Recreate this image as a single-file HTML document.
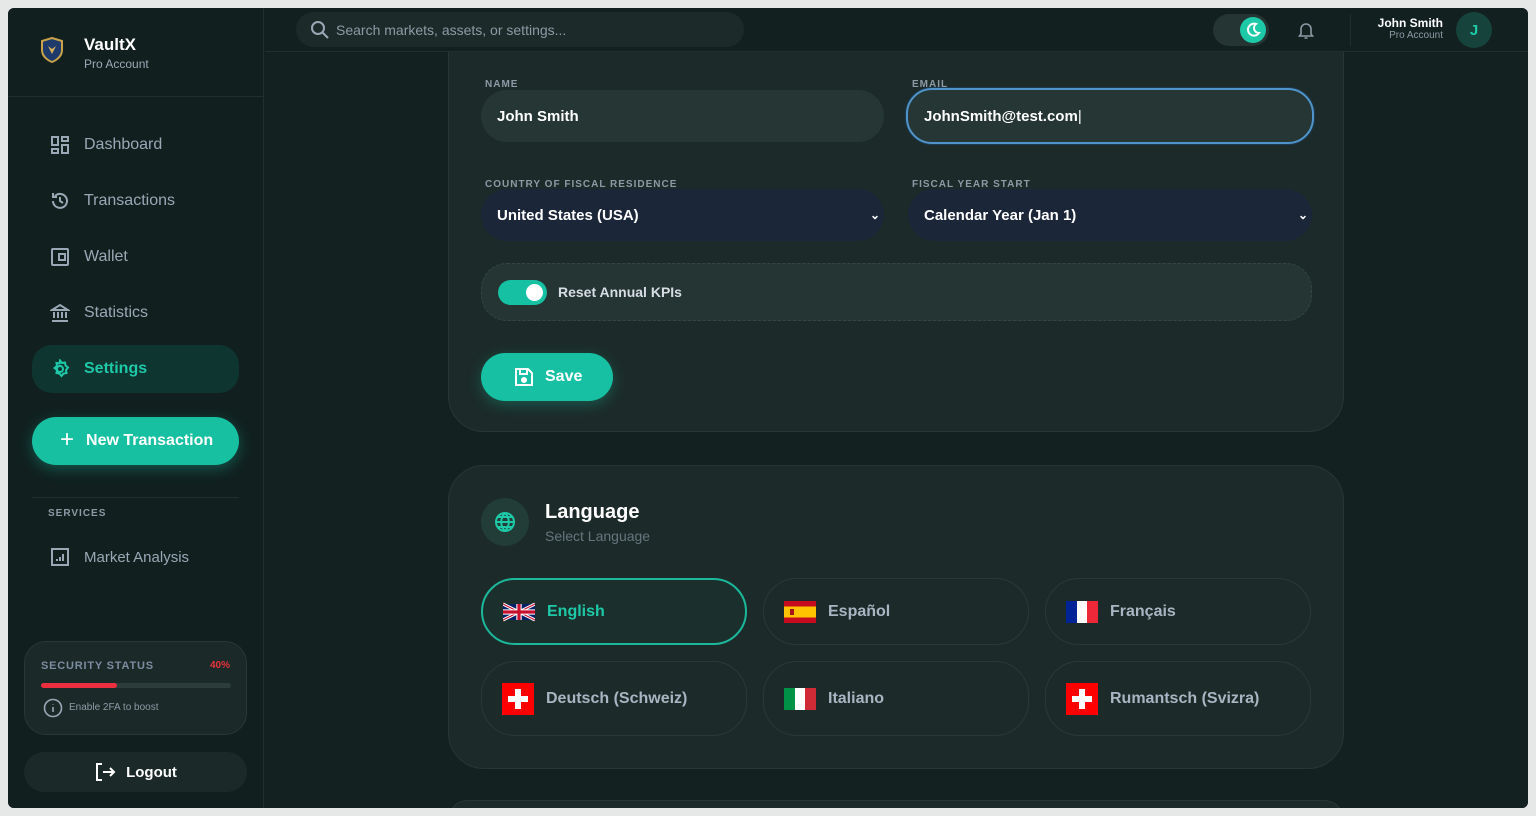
<!DOCTYPE html>
<html><head><meta charset="utf-8"><style>
*{box-sizing:border-box;margin:0;padding:0}
html,body{width:1536px;height:816px;overflow:hidden}
body{background:#e6e8e8;font-family:"Liberation Sans",sans-serif;position:relative}
.app{position:absolute;left:8px;top:8px;width:1520px;height:800px;background:#12201f;border-radius:6px;overflow:hidden}
.side{position:absolute;left:0;top:0;width:256px;height:800px;background:#11201f;border-right:1px solid #1f302e}
.abs{position:absolute}
.nav{position:absolute;left:24px;width:207px;height:48px;border-radius:20px;display:flex;align-items:center;padding-left:18px;color:#9aa8b6;font-size:16px}
.nav svg{margin-right:14px}
.main{position:absolute;left:257px;top:44px;right:0;bottom:0;background:#132220;overflow:hidden}
.card{position:absolute;left:183px;width:896px;background:#1c2b29;border:1px solid #263734;border-radius:36px}
.lbl{position:absolute;font-size:10px;font-weight:bold;letter-spacing:1px;color:#8d9aa6}
.inp{position:absolute;height:52px;border-radius:26px;background:#263634;color:#fff;font-size:15px;font-weight:bold;display:flex;align-items:center;padding-left:16px}
.sel{background:#1b2638}
.lang{position:absolute;width:266px;height:67px;border-radius:34px;border:1px solid #283a37;display:flex;align-items:center;padding-left:20px;color:#a9b5c2;font-size:16px;font-weight:bold}
.lang svg{margin-right:12px}
</style></head><body>
<div class="app">
<div class="side">
  <svg class="abs" style="left:32px;top:29px" width="24" height="26" viewBox="0 0 24 26"><path d="M12 1L22 4V13C22 19 17 23 12 25C7 23 2 19 2 13V4Z" fill="#1d3a6a" stroke="#c9a24a" stroke-width="2"/><path d="M8 9L12 17L16 9L12 12Z" fill="#d9b25a"/></svg>
  <div class="abs" style="left:76px;top:27px;color:#fff;font-size:17px;font-weight:bold">VaultX</div>
  <div class="abs" style="left:76px;top:49px;color:#9aa8b6;font-size:12px">Pro Account</div>
  <div class="abs" style="left:0;top:88px;width:256px;border-top:1px solid #1f302e"></div>
  <div class="nav" style="top:113px"><svg width="20" height="20" viewBox="0 0 20 20" fill="none" stroke="#9aa8b6" stroke-width="2"><rect x="2" y="2" width="6" height="8"/><rect x="12" y="2" width="6" height="4"/><rect x="2" y="14" width="6" height="4"/><rect x="12" y="10" width="6" height="8"/></svg>Dashboard</div>
  <div class="nav" style="top:169px"><svg width="20" height="20" viewBox="0 0 20 20" fill="none" stroke="#9aa8b6" stroke-width="2"><path d="M3 10a7 7 0 1 0 2-5M3 2v4h4M10 6v4l3 2"/></svg>Transactions</div>
  <div class="nav" style="top:225px"><svg width="20" height="20" viewBox="0 0 20 20" fill="none" stroke="#9aa8b6" stroke-width="2"><rect x="2" y="2" width="16" height="16" rx="1"/><rect x="9" y="7" width="6" height="6"/></svg>Wallet</div>
  <div class="nav" style="top:281px"><svg width="20" height="20" viewBox="0 0 20 20" fill="none" stroke="#9aa8b6" stroke-width="2"><path d="M2 7L10 2L18 7ZM4 9v6M8 9v6M12 9v6M16 9v6M2 18h16"/></svg>Statistics</div>
  <div class="nav" style="top:337px;background:#0e3530;color:#1ec9a8;font-weight:bold"><svg width="20" height="20" viewBox="0 0 20 20" fill="none" stroke="#1ec9a8" stroke-width="2"><circle cx="10" cy="10" r="3"/><path d="M10 1.5l2 2.5 3-.5.5 3 2.5 2-2 2.5.5 3-3 .5-2 2.5-2-2.5-3-.5.5-3-2.5-2 2.5-2-.5-3 3 .5z"/></svg>Settings</div>
  <div class="abs" style="left:24px;top:409px;width:207px;height:48px;border-radius:24px;background:#18c0a2;box-shadow:0 4px 14px rgba(24,192,162,.35);color:#fff;font-weight:bold;font-size:16px;display:flex;align-items:center;padding-left:28px"><span style="font-size:24px;font-weight:normal;margin-right:12px;margin-top:-3px">+</span>New Transaction</div>
  <div class="abs" style="left:24px;top:489px;width:207px;border-top:1px solid #1f302e"></div>
  <div class="abs" style="left:40px;top:500px;font-size:10px;font-weight:bold;letter-spacing:1px;color:#8d9aa6">SERVICES</div>
  <div class="nav" style="top:525px;font-size:15px"><svg width="20" height="20" viewBox="0 0 20 20" fill="none" stroke="#9aa8b6" stroke-width="2"><rect x="2" y="2" width="16" height="16"/><path d="M7 14v-2M10 14v-4M13 14V7"/></svg>Market Analysis</div>
  <div class="abs" style="left:16px;top:633px;width:223px;height:94px;border-radius:22px;background:#1b2a28;border:1px solid #273835">
    <div class="abs" style="left:16px;top:18px;font-size:11px;font-weight:bold;letter-spacing:.8px;color:#7d8ca0">SECURITY STATUS</div>
    <div class="abs" style="right:16px;top:18px;font-size:10px;font-weight:bold;color:#e8333d">40%</div>
    <div class="abs" style="left:16px;top:41px;width:190px;height:5px;border-radius:3px;background:#2c3c3a"><div style="width:76px;height:5px;border-radius:3px;background:#ec2f3e"></div></div>
    <svg class="abs" style="left:18px;top:56px" width="20" height="20" viewBox="0 0 20 20" fill="none" stroke="#9aa8b6" stroke-width="1.6"><circle cx="10" cy="10" r="8.5"/><path d="M10 9v5M10 6v.5"/></svg>
    <div class="abs" style="left:44px;top:60px;font-size:10px;color:#8d9aa6">Enable 2FA to boost</div>
  </div>
  <div class="abs" style="left:16px;top:744px;width:223px;height:40px;border-radius:20px;background:#1b2a28;color:#fff;font-weight:bold;font-size:15px;display:flex;align-items:center;justify-content:center"><svg width="22" height="20" viewBox="0 0 22 20" fill="none" stroke="#fff" stroke-width="2" style="margin-right:10px"><path d="M8 2H3v16h5M9 10h11M16 6l4 4-4 4"/></svg>Logout</div>
</div>

<div class="main">
  <div class="card" style="top:-60px;height:440px">
    <div class="lbl" style="left:36px;top:86px">NAME</div>
    <div class="inp" style="left:32px;top:97px;width:403px">John Smith</div>
    <div class="lbl" style="left:463px;top:86px">EMAIL</div>
    <div class="inp" style="left:457px;top:95px;width:408px;height:56px;border:2px solid #4f94c8;box-shadow:0 0 0 1px #1d3a52">JohnSmith@test.com<span style="font-weight:normal">|</span></div>
    <div class="lbl" style="left:36px;top:186px">COUNTRY OF FISCAL RESIDENCE</div>
    <div class="inp sel" style="left:32px;top:196px;width:403px">United States (USA)<span style="position:absolute;right:4px;font-size:12px">&#8964;</span></div>
    <div class="lbl" style="left:463px;top:186px">FISCAL YEAR START</div>
    <div class="inp sel" style="left:459px;top:196px;width:404px">Calendar Year (Jan 1)<span style="position:absolute;right:4px;font-size:12px">&#8964;</span></div>
    <div class="abs" style="left:32px;top:270px;width:831px;height:58px;border-radius:26px;background:#253533;border:1px dashed #34463f"></div>
    <div class="abs" style="left:49px;top:287px;width:49px;height:25px;border-radius:13px;background:#16c0a2"><div style="position:absolute;right:4px;top:4px;width:17px;height:17px;border-radius:50%;background:#fff"></div></div>
    <div class="abs" style="left:109px;top:291px;color:#d6dde4;font-size:14px;font-weight:bold">Reset Annual KPIs</div>
    <div class="abs" style="left:32px;top:360px;width:132px;height:48px;border-radius:24px;background:#17c0a2;box-shadow:0 4px 14px rgba(23,192,162,.3);color:#fff;font-weight:bold;font-size:16px;display:flex;align-items:center;padding-left:33px"><svg width="20" height="20" viewBox="0 0 20 20" fill="none" stroke="#fff" stroke-width="2" style="margin-right:11px"><path d="M2 2h12l4 4v12H2z"/><path d="M6 2v5h7V2"/><circle cx="10" cy="13" r="2" fill="#fff"/></svg>Save</div>
  </div>

  <div class="card" style="top:413px;height:304px">
    <div class="abs" style="left:32px;top:32px;width:48px;height:48px;border-radius:50%;background:#223c37"></div>
    <svg class="abs" style="left:45px;top:45px" width="22" height="22" viewBox="0 0 22 22" fill="none" stroke="#1ec9a8" stroke-width="2"><circle cx="11" cy="11" r="9"/><path d="M2 11h18M11 2c-5 5-5 13 0 18M11 2c5 5 5 13 0 18M4 6h14M4 16h14"/></svg>
    <div class="abs" style="left:96px;top:35px;color:#fff;font-size:20px;font-weight:bold">Language</div>
    <div class="abs" style="left:96px;top:62px;color:#66757f;font-size:14px">Select Language</div>
    <div class="lang" style="left:32px;top:112px;border:2px solid #1bb89c;background:#1b302d;color:#1ec9a8"><svg width="32" height="20" viewBox="0 0 60 30"><rect width="60" height="30" fill="#012169"/><path d="M0 0L60 30M60 0L0 30" stroke="#fff" stroke-width="6"/><path d="M0 0L60 30M60 0L0 30" stroke="#c8102e" stroke-width="2"/><path d="M30 0v30M0 15h60" stroke="#fff" stroke-width="10"/><path d="M30 0v30M0 15h60" stroke="#c8102e" stroke-width="6"/></svg>English</div>
    <div class="lang" style="left:314px;top:112px"><svg width="32" height="22" viewBox="0 0 32 22"><rect width="32" height="22" fill="#c60b1e"/><rect y="5.5" width="32" height="11" fill="#ffc400"/><rect x="6" y="8" width="4" height="6" fill="#ad1519"/></svg>Español</div>
    <div class="lang" style="left:596px;top:112px"><svg width="32" height="22" viewBox="0 0 32 22"><rect width="11" height="22" fill="#002395"/><rect x="11" width="10" height="22" fill="#fff"/><rect x="21" width="11" height="22" fill="#ed2939"/></svg>Français</div>
    <div class="lang" style="left:32px;top:195px;height:75px"><svg width="32" height="32" viewBox="0 0 32 32"><rect width="32" height="32" fill="#f00"/><path d="M13 6h6v7h7v6h-7v7h-6v-7H6v-6h7z" fill="#fff"/></svg>Deutsch (Schweiz)</div>
    <div class="lang" style="left:314px;top:195px;height:75px"><svg width="32" height="22" viewBox="0 0 32 22"><rect width="11" height="22" fill="#009246"/><rect x="11" width="10" height="22" fill="#fff"/><rect x="21" width="11" height="22" fill="#ce2b37"/></svg>Italiano</div>
    <div class="lang" style="left:596px;top:195px;height:75px"><svg width="32" height="32" viewBox="0 0 32 32"><rect width="32" height="32" fill="#f00"/><path d="M13 6h6v7h7v6h-7v7h-6v-7H6v-6h7z" fill="#fff"/></svg>Rumantsch (Svizra)</div>
  </div>
  <div class="card" style="top:748px;height:40px"></div>
</div>

<div class="abs" style="left:257px;top:0;right:0;height:44px;background:#12201f;border-bottom:1px solid #1f302e">
  <div class="abs" style="left:31px;top:4px;width:448px;height:35px;border-radius:18px;background:#1c2b29"></div>
  <svg class="abs" style="left:45px;top:12px" width="20" height="20" viewBox="0 0 20 20" fill="none" stroke="#9aa8b6" stroke-width="2"><circle cx="8" cy="8" r="6"/><path d="M12.5 12.5L18 18"/></svg>
  <div class="abs" style="left:71px;top:14px;color:#8d9aa6;font-size:14px">Search markets, assets, or settings...</div>
  <div class="abs" style="left:948px;top:6px;width:56px;height:32px;border-radius:16px;background:#253533"></div>
  <div class="abs" style="left:975px;top:9px;width:26px;height:26px;border-radius:50%;background:#1ec9a8"></div>
  <svg class="abs" style="left:980px;top:14px" width="16" height="16" viewBox="0 0 16 16" fill="none" stroke="#fff" stroke-width="2"><path d="M11 2a6 6 0 1 0 3 9 5 5 0 0 1-3-9z"/></svg>
  <svg class="abs" style="left:1031px;top:12px" width="20" height="20" viewBox="0 0 20 20" fill="none" stroke="#8d9aa6" stroke-width="1.6"><path d="M5 14V9a5 5 0 0 1 10 0v5l1.5 2h-13zM8.5 18h3"/></svg>
  <div class="abs" style="left:1085px;top:6px;height:32px;border-left:1px solid #1f302e"></div>
  <div class="abs" style="right:85px;top:8px;color:#fff;font-size:12px;font-weight:bold;text-align:right">John Smith</div>
  <div class="abs" style="right:85px;top:22px;color:#8d9aa6;font-size:10px;text-align:right">Pro Account</div>
  <div class="abs" style="left:1191px;top:4px;width:36px;height:36px;border-radius:50%;background:#16433b;color:#1ec9a8;font-weight:bold;font-size:15px;display:flex;align-items:center;justify-content:center">J</div>
</div>
</div>
</body></html>
